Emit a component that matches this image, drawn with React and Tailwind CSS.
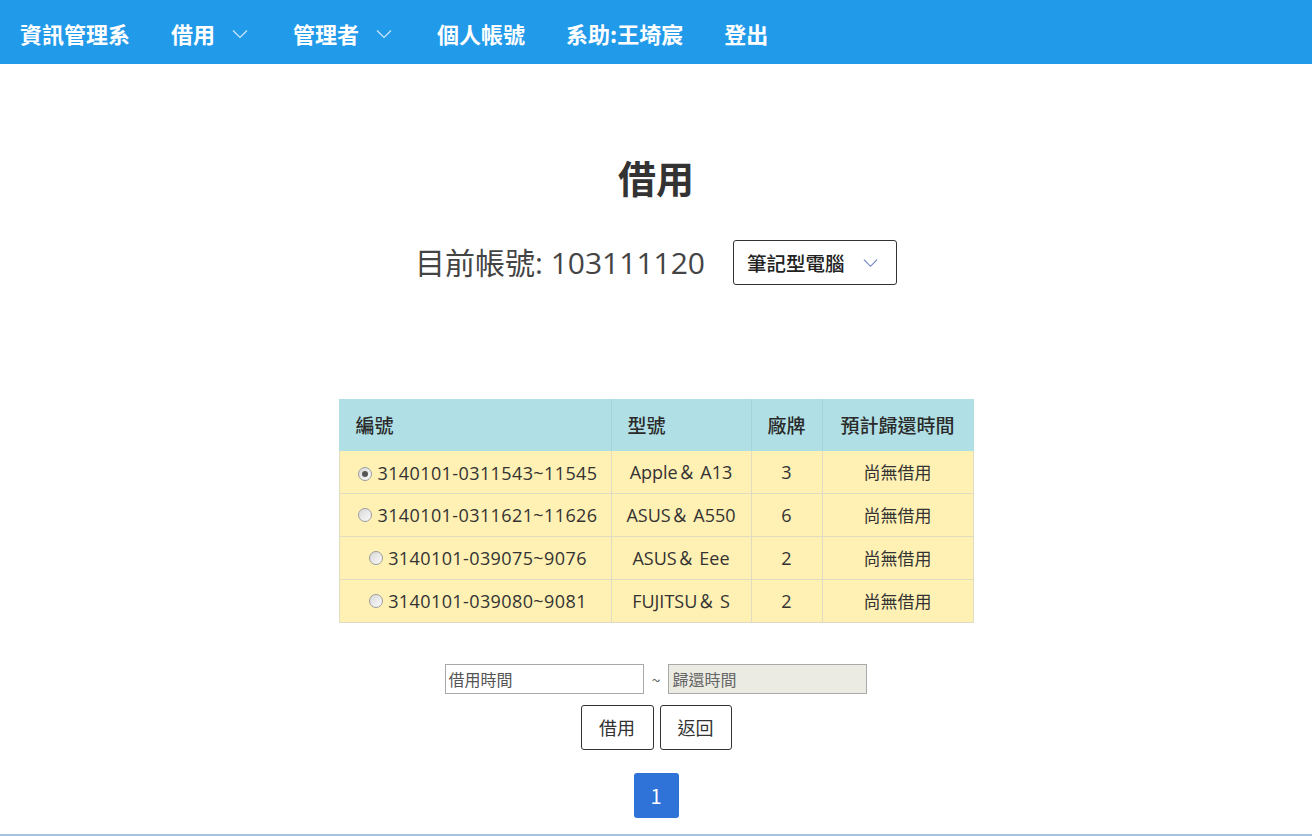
import React from "react";

const font = { fontFamily: '"Noto Sans CJK TC", "Noto Sans", sans-serif' };
const latin = { fontFamily: '"Open Sans", "Noto Sans CJK TC", sans-serif' };

const rows = [
  { id: "3140101-0311543~11545", model: "Apple\uFF06 A13", brand: "3", checked: true },
  { id: "3140101-0311621~11626", model: "ASUS\uFF06 A550", brand: "6" },
  { id: "3140101-039075~9076", model: "ASUS\uFF06 Eee", brand: "2" },
  { id: "3140101-039080~9081", model: "FUJITSU\uFF06 S", brand: "2" },
];

function Chevron({ className }) {
  return (
    <svg className={className} width="16" height="10" viewBox="0 0 16 10" fill="none">
      <path d="M1 1.5L8 8.5L15 1.5" stroke="currentColor" strokeWidth="1.2" />
    </svg>
  );
}

function Radio({ checked }) {
  return (
    <span className="inline-flex w-[14px] h-[14px] ml-[6px] rounded-full border border-[#9c9c9c] bg-gradient-to-br from-[#d8d8d8] to-[#fbfbfb] items-center justify-center mr-[5px]">
      {checked && <span className="w-[6px] h-[6px] rounded-full bg-[#555]" />}
    </span>
  );
}

export default function App() {
  return (
    <div className="min-h-[836px] bg-white flex flex-col" style={font}>
      <nav className="h-16 bg-[#229aea] flex items-center pl-5 pt-[3px] text-white text-[22px] font-bold">
        <span className="mr-[41px]">資訊管理系</span>
        <span className="flex items-center mr-[45px]">
          借用
          <Chevron className="ml-[17px] text-[#cfe8fa]" />
        </span>
        <span className="flex items-center mr-[45px]">
          管理者
          <Chevron className="ml-[17px] text-[#cfe8fa]" />
        </span>
        <span className="mr-[41px]">個人帳號</span>
        <span className="mr-[41px]">系助:王埼宸</span>
        <span>登出</span>
      </nav>

      <main className="flex-1 flex flex-col items-center">
        <h1 className="mt-[88px] text-[38px] font-bold text-[#333] leading-[50px]">借用</h1>

        <div className="mt-[38px] flex items-center">
          <span className="text-[30px] text-[#444] leading-[44px]" style={latin}>
            目前帳號: 103111120
          </span>
          <div className="ml-[28px] w-[164px] h-[45px] border border-[#333] rounded-[3px] flex items-center pl-[13px] text-[19.5px] font-medium text-[#222]">
            筆記型電腦
            <Chevron className="ml-[18px] text-[#6b7fc4] w-[15px]" />
          </div>
        </div>

        <table className="mt-[114px] w-[635px] border-collapse text-[17px] text-[#333]">
          <thead>
            <tr className="bg-[#b0e0e6] h-[51px] font-medium text-[19px] text-[#2a2a2a]">
              <th className="w-[272px] text-left pl-[16px] font-medium border border-[#b0e0e6] border-r-[#a4d4da]">編號</th>
              <th className="w-[140px] text-left pl-[16px] font-medium border border-[#b0e0e6] border-r-[#a4d4da]">型號</th>
              <th className="w-[71px] font-medium border border-[#b0e0e6] border-r-[#a4d4da]">廠牌</th>
              <th className="font-medium border border-[#b0e0e6]">預計歸還時間</th>
            </tr>
          </thead>
          <tbody>
            {rows.map((r) => (
              <tr key={r.id} className="bg-[#fff0b3] h-[43px] text-center">
                <td className="border border-[#e0dcc4]">
                  <span className="inline-flex items-center text-[18px] tracking-[0.4px]" style={latin}>
                    <Radio checked={r.checked} />
                    {r.id}
                  </span>
                </td>
                <td className="border border-[#e0dcc4] text-[18px]" style={latin}>{r.model}</td>
                <td className="border border-[#e0dcc4] text-[18px]" style={latin}>{r.brand}</td>
                <td className="border border-[#e0dcc4]">尚無借用</td>
              </tr>
            ))}
          </tbody>
        </table>

        <div className="mt-[41px] flex items-center text-[16px]">
          <div className="w-[199px] h-[30px] border border-[#a9a9a9] flex items-center pl-[3px] text-[#555]">借用時間</div>
          <span className="mx-[8px] text-[#666]">~</span>
          <div className="w-[199px] h-[30px] border border-[#a9a9a9] bg-[#ebebe4] flex items-center pl-[3px] text-[#666]">歸還時間</div>
        </div>

        <div className="mt-[11px] flex gap-[6px]">
          <button className="w-[73px] h-[45px] border border-[#333] rounded-[3px] bg-white text-[18px] text-[#333]">借用</button>
          <button className="w-[72px] h-[45px] border border-[#333] rounded-[3px] bg-white text-[18px] text-[#333]">返回</button>
        </div>

        <div className="mt-[23px] w-[45px] h-[45px] rounded-[3px] bg-[#2f72d8] text-white text-[20px] flex items-center justify-center">1</div>
      </main>

      <div className="h-[2px] bg-[#a9c4e2] mt-[15px]" />
    </div>
  );
}
